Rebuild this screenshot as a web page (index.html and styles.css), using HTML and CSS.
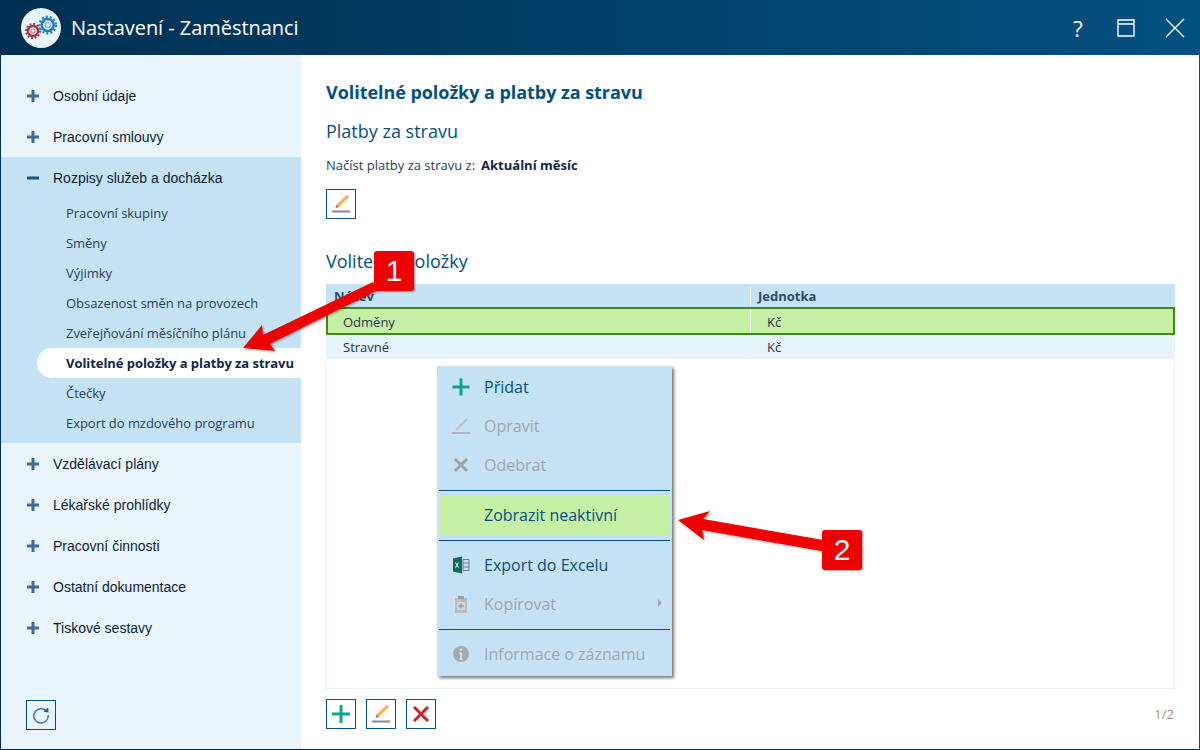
FILE: index.html
```html
<!DOCTYPE html>
<html lang="cs">
<head>
<meta charset="utf-8">
<title>Nastavení - Zaměstnanci</title>
<link rel="stylesheet" href="styles.css">
</head>
<body>
<div class="window">
  <header class="titlebar">
    <div class="logo">
      <svg width="38" height="38" viewBox="0 0 38 38">
        <g fill="none">
          <circle cx="11" cy="22" r="5" stroke="#a8323f" stroke-width="2.400"/>
          <circle cx="11" cy="22" r="7" stroke="#a8323f" stroke-width="2" stroke-dasharray="1.900 1.760"/>
          <circle cx="11" cy="22" r="2" stroke="#c9868e" stroke-width="1.200"/>
          <circle cx="25.700" cy="16" r="6" stroke="#1e7fc0" stroke-width="2.600"/>
          <circle cx="25.700" cy="16" r="8.300" stroke="#1e7fc0" stroke-width="2.200" stroke-dasharray="2.100 2"/>
          <circle cx="25.700" cy="16" r="2.600" stroke="#7db6dd" stroke-width="1.200"/>
        </g>
      </svg>
    </div>
    <div class="title">Nastavení - Zaměstnanci</div>
    <div class="winbtns">
      <span class="help">?</span>
      <svg class="winicon" width="18" height="18" viewBox="0 0 18 18"><path d="M1 1h16v16H1zM1 5h16" fill="none" stroke="#fff" stroke-width="1.400"/></svg>
      <svg class="winicon" width="20" height="20" viewBox="0 0 20 20"><path d="M1 1l18 18M19 1L1 19" fill="none" stroke="#fff" stroke-width="1.300"/></svg>
    </div>
  </header>
  <div class="body">
    <nav class="sidebar">
      <div class="navtop"><svg class="pm" viewBox="0 0 12 12"><path d="M0 6h12M6 0v12"/></svg>Osobní údaje</div>
      <div class="navtop"><svg class="pm" viewBox="0 0 12 12"><path d="M0 6h12M6 0v12"/></svg>Pracovní smlouvy</div>
      <div class="group">
        <div class="navtop"><svg class="pm minus" viewBox="0 0 12 12"><path d="M0 6h12"/></svg>Rozpisy služeb a docházka</div>
        <div class="sub">Pracovní skupiny</div>
        <div class="sub">Směny</div>
        <div class="sub">Výjimky</div>
        <div class="sub">Obsazenost směn na provozech</div>
        <div class="sub">Zveřejňování měsíčního plánu</div>
        <div class="sub active">Volitelné položky a platby za stravu</div>
        <div class="sub">Čtečky</div>
        <div class="sub">Export do mzdového programu</div>
      </div>
      <div class="navtop"><svg class="pm" viewBox="0 0 12 12"><path d="M0 6h12M6 0v12"/></svg>Vzdělávací plány</div>
      <div class="navtop"><svg class="pm" viewBox="0 0 12 12"><path d="M0 6h12M6 0v12"/></svg>Lékařské prohlídky</div>
      <div class="navtop"><svg class="pm" viewBox="0 0 12 12"><path d="M0 6h12M6 0v12"/></svg>Pracovní činnosti</div>
      <div class="navtop"><svg class="pm" viewBox="0 0 12 12"><path d="M0 6h12M6 0v12"/></svg>Ostatní dokumentace</div>
      <div class="navtop"><svg class="pm" viewBox="0 0 12 12"><path d="M0 6h12M6 0v12"/></svg>Tiskové sestavy</div>
      <div class="sidefoot">
        <button class="iconbtn">
          <svg width="18" height="18" viewBox="0 0 18 18"><path d="M14.800 5.500A7.200 7.200 0 1 0 16.200 9" fill="none" stroke="#3f7aa8" stroke-width="1.500"/><path d="M11.500 5.800l5 .6-.3-5z" fill="#1f5f8f"/></svg>
        </button>
      </div>
    </nav>
    <main class="content">
      <h1>Volitelné položky a platby za stravu</h1>
      <h2 class="h2first">Platby za stravu</h2>
      <div class="loadrow"><span>Načíst platby za stravu z:</span><b>Aktuální měsíc</b></div>
      <button class="iconbtn">
        <svg width="20" height="20" viewBox="0 0 20 20"><path d="M1 17.500h18" stroke="#8f8095" stroke-width="2"/><path d="M4.500 14l1-3.500L14.500 2l2.300 2.300L8 13z" fill="#f6b44a"/><path d="M14.500 2l1-.8 2.100 2.100-.8 1z" fill="#e0707a"/><path d="M4.500 14l1-3.500L8 13z" fill="#8f8095"/></svg>
      </button>
      <h2 class="h2second">Volitelné položky</h2>
      <div class="table">
        <div class="tr thead"><div class="c1">Název</div><div class="c2">Jednotka</div></div>
        <div class="tr selected"><div class="c1">Odměny</div><div class="c2">Kč</div></div>
        <div class="tr plain"><div class="c1">Stravné</div><div class="c2">Kč</div></div>
        <div class="tbody"></div>
      </div>
      <div class="footrow">
        <button class="iconbtn">
          <svg width="20" height="20" viewBox="0 0 20 20"><path d="M1 10h18M10 1v18" stroke="#0fa58a" stroke-width="3"/></svg>
        </button>
        <button class="iconbtn">
          <svg width="20" height="20" viewBox="0 0 20 20"><path d="M1 17.500h18" stroke="#8f8095" stroke-width="2"/><path d="M4.500 14l1-3.500L14.500 2l2.300 2.300L8 13z" fill="#f6b44a"/><path d="M14.500 2l1-.8 2.100 2.100-.8 1z" fill="#e0707a"/><path d="M4.500 14l1-3.500L8 13z" fill="#8f8095"/></svg>
        </button>
        <button class="iconbtn">
          <svg width="16" height="16" viewBox="0 0 16 16"><path d="M1 1l14 14M15 1L1 15" stroke="#d0202e" stroke-width="3"/></svg>
        </button>
        <span class="pager">1/2</span>
      </div>
    </main>
  </div>

  <div class="menu">
    <div class="mi"><svg class="mic" viewBox="0 0 18 18"><path d="M.5 9h17M9 .5v17" stroke="#0fa58a" stroke-width="3"/></svg>Přidat</div>
    <div class="mi off"><svg class="mic" viewBox="0 0 18 18"><path d="M0 16h18" stroke="#a9a9a9" stroke-width="1.600"/><path d="M4 13L15 2" stroke="#c4c4c4" stroke-width="2.400"/></svg>Opravit</div>
    <div class="mi off"><svg class="mic" viewBox="0 0 18 18"><path d="M3 3l12 12M15 3L3 15" stroke="#a3a3a3" stroke-width="3"/></svg>Odebrat</div>
    <div class="sep"></div>
    <div class="mi hl"><span class="mic"></span>Zobrazit neaktivní</div>
    <div class="sep"></div>
    <div class="mi"><svg class="mic" viewBox="0 0 18 18"><path d="M1 2.500L10 .5v17l-9-2z" fill="#0b6e58"/><path d="M11 3.500h6v11h-6zM11 7h6M11 11h6" fill="none" stroke="#77799a" stroke-width="1"/><path d="M3.500 6.500l3 5M6.500 6.500l-3 5" stroke="#fff" stroke-width="1"/></svg>Export do Excelu</div>
    <div class="mi off"><svg class="mic" viewBox="0 0 18 18"><path d="M3 3h12v15H3z" fill="#bcbcbc"/><path d="M6 1h6v3H6z" fill="#9f9f9f"/><path d="M5 7h8v8H5z" fill="#d4d6d8"/><path d="M6.500 11h5M9 8.500v5" stroke="#9a9a9a" stroke-width="1.500"/></svg>Kopírovat<span class="caret"></span></div>
    <div class="sep"></div>
    <div class="mi off"><svg class="mic" viewBox="0 0 18 18"><circle cx="9" cy="9" r="8" fill="#a9a9a9"/><path d="M9 7.500V14M7.500 7.800H9M7.500 14h3" stroke="#c8e3f4" stroke-width="1.800" fill="none"/><circle cx="9" cy="4.700" r="1.300" fill="#c8e3f4"/></svg>Informace o záznamu</div>
  </div>

  <svg class="arrows" width="1200" height="750" viewBox="0 0 1200 750">
    <defs><filter id="soft" x="-10%" y="-10%" width="130%" height="130%"><feDropShadow dx="1" dy="1" stdDeviation="1" flood-color="#000" flood-opacity=".35"/></filter></defs>
    <path filter="url(#soft)" fill="#ee0000" d="M243 348L262 325L263 335L373 282L376 291L270 344L275 351Z"/>
    <path filter="url(#soft)" fill="#ee0000" d="M678 520L710 511L703 519L823 540L822 551L702 530L704 540Z"/>
  </svg>
  <div class="badge b1">1</div>
  <div class="badge b2">2</div>
</div>
</body>
</html>
```
FILE: styles.css
```css
* { box-sizing: border-box; }
html, body { margin: 0; padding: 0; }
body { width: 1200px; height: 750px; overflow: hidden; background: #fff; font-family: "Open Sans", sans-serif; }
.window { position: relative; width: 1200px; height: 750px; display: flex; flex-direction: column; border: 1px solid #003050; border-top: 0; border-right: 1px solid #03507f; }
.titlebar { height: 55px; flex: none; margin: 0 -1px; display: flex; align-items: center; background: linear-gradient(90deg, #002f50 0%, #02406a 50%, #03507f 100%); color: #fff; padding-left: 21px; }
.logo { width: 40px; height: 40px; border-radius: 50%; background: #eaf5fb; display: flex; align-items: center; justify-content: center; }
.title { margin-left: 10px; font-size: 20px; letter-spacing: -.04px; }
.winbtns { margin-left: auto; display: flex; align-items: center; }
.help { font-size: 22px; width: 20px; text-align: center; margin-right: 29px; font-family: "Open Sans", sans-serif; }
.winicon:nth-of-type(1) { margin-right: 30px; }
.winicon:nth-of-type(2) { margin-right: 15px; }
.body { flex: 1; display: flex; min-height: 0; }
.sidebar { width: 300px; flex: none; background: #e9f5fb; padding-top: 20px; display: flex; flex-direction: column; }
.navtop { height: 41px; display: flex; align-items: center; padding: 1px 0 0 26px; font: 14px "Liberation Sans", sans-serif; color: #0c1e35; }
.pm { width: 12px; height: 12px; margin-right: 14px; flex: none; }
.pm path { stroke: #3d6c9b; stroke-width: 3; fill: none; }
.pm.minus path { stroke: #1d5284; }
.group { background: #c5e3f5; padding-bottom: 5px; }
.sub { height: 30px; display: flex; align-items: center; padding-left: 65px; font-size: 13px; color: #24405c; letter-spacing: -.04px; }
.sub.active { background: #fff; font-weight: 700; color: #0f2747; margin-left: 36px; padding-left: 29px; border-radius: 15px 0 0 15px; letter-spacing: -.06px; }
.sidefoot { margin-top: auto; padding: 0 0 19px 25px; }
.iconbtn { width: 30px; height: 30px; padding: 0; border: 1px solid #03507f; background: transparent; display: flex; align-items: center; justify-content: center; }
.content { flex: 1; min-width: 0; padding: 26px 24px 20px 25px; display: flex; flex-direction: column; }
h1 { margin: 0; font-size: 18px; line-height: 22px; font-weight: 700; color: #03507f; letter-spacing: -.05px; }
h2 { margin: 0; font-size: 18px; line-height: 24px; font-weight: 400; color: #03507f; }
.h2first { margin-top: 16px; }
.loadrow { margin-top: 13px; font-size: 13px; line-height: 18px; color: #24405c; display: flex; gap: 6px; }
.loadrow b { color: #0f2747; }
.content > .iconbtn { margin-top: 15px; }
.h2second { margin-top: 30px; }
.table { margin-top: 11px; flex: 1; display: flex; flex-direction: column; min-height: 0; }
.tr { display: flex; flex: none; font-size: 13px; }
.thead { height: 23px; background: #c5e3f5; font-weight: 700; color: #2f4a6d; align-items: center; }
.thead .c1 { padding-left: 8px; }
.thead .c2 { padding-left: 7px; }
.c1 { width: 425px; flex: none; border-right: 1px solid #e9f5fb; }
.c2 { flex: 1; }
.selected { height: 28px; background: #c7f0a7; border: 2px solid #3f8a12; color: #1f3550; align-items: center; padding-top: 1px; }
.selected .c1 { padding-left: 15px; width: 423px; height: 100%; display: flex; align-items: center; }
.selected .c2 { padding-left: 16px; }
.plain { height: 24px; background: #e6f3fa; color: #1f3550; align-items: center; }
.plain .c1 { padding-left: 17px; height: 100%; display: flex; align-items: center; }
.plain .c2 { padding-left: 16px; }
.tbody { flex: 1; border: 1px solid #e8eef8; border-top: 0; }
.footrow { margin-top: 10px; display: flex; align-items: center; gap: 10px; height: 30px; }
.pager { margin-left: auto; font-size: 13px; color: #b08a70; padding-right: 1px; }
.menu { position: absolute; left: 436px; top: 366px; width: 235px; height: 310px; background: #c5e3f5; box-shadow: 2px 2px 3px rgba(0,0,0,.55); padding: 2px 2px 0; font-size: 16px; color: #03507f; }
.mi { height: 39px; display: flex; align-items: center; padding: 0 0 2px 13px; position: relative; }
.mi.off { color: #a3a7ab; }
.mi.hl { background: #c7f0a7; }
.mic { width: 18px; height: 18px; margin-right: 14px; flex: none; display: block; }
.caret { position: absolute; right: 8px; top: 14px; border-left: 4px solid #a3a7ab; border-top: 4px solid transparent; border-bottom: 4px solid transparent; }
.sep { height: 1px; background: #03507f; margin: 5px 0; }
.arrows { position: absolute; left: -1px; top: 0; pointer-events: none; }
.badge { position: absolute; width: 40px; height: 40px; background: #ee0000; color: #fff; border-radius: 3px; box-shadow: 1px 1px 2px rgba(0,0,0,.4); font: 30px/40px "Liberation Sans", sans-serif; text-align: center; }
.b1 { left: 373px; top: 251px; }
.b2 { left: 821px; top: 530px; }
```
